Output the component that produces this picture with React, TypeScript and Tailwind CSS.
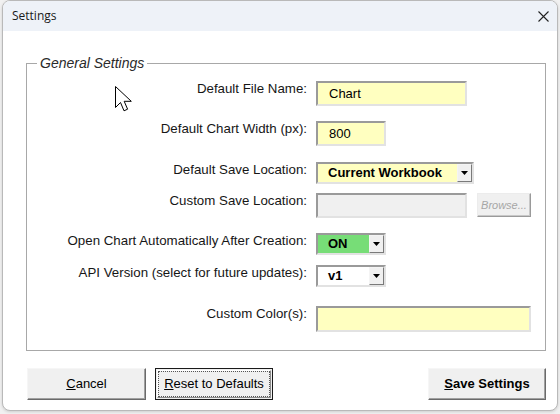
import React from "react";

const sunken =
  "border-2 border-t-[#9a9a9a] border-l-[#9a9a9a] border-b-[#e2e2e2] border-r-[#e2e2e2]";

function Arrow() {
  return (
    <svg width="7" height="4" viewBox="0 0 7 4">
      <path d="M0 0 H7 L3.5 4 Z" fill="#000" />
    </svg>
  );
}

function Combo({ cls, bg, text }: { cls: string; bg: string; text: string }) {
  return (
    <div className={`flex h-[22px] ${sunken} ${cls}`}>
      <div className={`flex flex-1 items-center pl-[10px] text-[13px] font-bold text-black ${bg}`}>
        {text}
      </div>
      <div className="flex w-[15px] items-center justify-center border border-t-[#f4f4f4] border-l-[#f4f4f4] border-b-[#7a7a7a] border-r-[#7a7a7a] bg-[#f0f0f0]">
        <Arrow />
      </div>
    </div>
  );
}

function Row({
  label,
  mt,
  children,
}: {
  label: string;
  mt: string;
  children: React.ReactNode;
}) {
  return (
    <div className={`flex items-start gap-[9px] ${mt}`}>
      <div className="w-[280px] text-right text-[13.3px] leading-[16px] text-[#161616]">{label}</div>
      {children}
    </div>
  );
}

function Cursor() {
  return (
    <svg
      className="absolute left-[114px] top-[85px]"
      width="20"
      height="28"
      viewBox="0 0 20 28"
    >
      <path
        d="M1.5 1.5 V22.5 L6.5 17.5 L10 25.8 L13.6 24.2 L10.2 16.3 H17.3 Z"
        fill="#fff"
        stroke="#000"
        strokeWidth="1"
        strokeLinejoin="miter"
      />
    </svg>
  );
}

export default function App() {
  return (
    <div
      className="relative h-[414px] w-[560px] bg-[#f1f1f1] pl-[2px]"
      style={{ fontFamily: '"Liberation Sans", Arial, sans-serif' }}
    >
      <div className="flex h-[411px] w-[556px] flex-col overflow-hidden rounded-[8px] border border-[#b9b9b9] bg-white shadow-[0_1px_3px_rgba(0,0,0,0.15)]">
        {/* Title bar */}
        <div className="flex h-[30px] shrink-0 items-center justify-between bg-[#eef2f8] pl-[9px] pr-[7px]">
          <span
            className="text-[12px] text-[#1a1a1a]"
            style={{ fontFamily: '"Open Sans", "Noto Sans", sans-serif' }}
          >
            Settings
          </span>
          <svg width="11" height="11" viewBox="0 0 11 11" className="mr-[1px]">
            <path d="M0.5 0.5 L10.5 10.5 M10.5 0.5 L0.5 10.5" stroke="#222" strokeWidth="1.1" />
          </svg>
        </div>

        {/* Body */}
        <div className="flex flex-1 flex-col pt-[24px]">
          <fieldset className="ml-[23px] h-[296px] w-[520px] border border-[#a8a8a8] px-0 pb-0 pt-[10px] shadow-[inset_1px_1px_0_#ffffff]">
            <legend className="ml-[10px] px-[3px] text-[14px] italic leading-[16px] text-[#2a2a2a]">
              General Settings
            </legend>

            <Row label="Default File Name:" mt="mt-0">
              <div className={`flex h-[25px] w-[151px] items-center bg-[#ffffc0] pl-[11px] text-[13px] text-black ${sunken}`}>
                Chart
              </div>
            </Row>

            <Row label="Default Chart Width (px):" mt="mt-[15px]">
              <div className={`flex h-[25px] w-[70px] items-center bg-[#ffffc0] pl-[11px] text-[13px] text-black ${sunken}`}>
                800
              </div>
            </Row>

            <Row label="Default Save Location:" mt="mt-[16px]">
              <Combo cls="w-[158px]" bg="bg-[#ffffc0]" text="Current Workbook" />
            </Row>

            <Row label="Custom Save Location:" mt="mt-[9px]">
              <div className="flex items-start gap-[10px]">
                <div className={`h-[25px] w-[151px] bg-[#f0f0f0] ${sunken}`} />
                <div className="flex h-[24px] w-[54px] items-center justify-center border border-t-[#ececec] border-l-[#ececec] border-b-[#9a9a9a] border-r-[#9a9a9a] bg-[#f0f0f0] text-[11px] italic text-[#a6a6a6] shadow-[inset_-1px_-1px_0_#c8c8c8]">
                  Browse...
                </div>
              </div>
            </Row>

            <Row label="Open Chart Automatically After Creation:" mt="mt-[15px]">
              <Combo cls="w-[70px]" bg="bg-[#77dd77]" text="ON" />
            </Row>

            <Row label="API Version (select for future updates):" mt="mt-[10px]">
              <Combo cls="w-[70px]" bg="bg-white" text="v1" />
            </Row>

            <Row label="Custom Color(s):" mt="mt-[19px]">
              <div className={`h-[26px] w-[215px] bg-[#ffffc0] ${sunken}`} />
            </Row>
          </fieldset>

          {/* Buttons */}
          <div className="mt-[17px] flex pl-[24px] pr-[11px]">
            <button className="flex h-[32px] w-[119px] items-center justify-center border border-t-[#f6f6f6] border-l-[#f6f6f6] border-b-[#6a6a6a] border-r-[#6a6a6a] bg-[#f0f0f0] text-[13px] text-black shadow-[inset_-1px_-1px_0_#a0a0a0]">
              <span>
                <span className="underline">C</span>ancel
              </span>
            </button>
            <button className="ml-[9px] flex h-[32px] w-[118px] items-center justify-center border border-[#1a1a1a] bg-[#f0f0f0] p-[1px] text-[13px] text-black">
              <span className="flex h-full w-full items-center justify-center border border-t-[#ffffff] border-l-[#ffffff] border-b-[#8a8a8a] border-r-[#8a8a8a]">
                <span className="flex h-full w-full items-center justify-center border border-dotted border-[#555]">
                  <span>
                    <span className="underline">R</span>eset to Defaults
                  </span>
                </span>
              </span>
            </button>
            <button className="ml-auto flex h-[32px] w-[118px] items-center justify-center border border-t-[#f6f6f6] border-l-[#f6f6f6] border-b-[#6a6a6a] border-r-[#6a6a6a] bg-[#f0f0f0] text-[13px] font-bold text-black shadow-[inset_-1px_-1px_0_#a0a0a0]">
              <span>
                <span className="underline">S</span>ave Settings
              </span>
            </button>
          </div>
        </div>
      </div>
      <Cursor />
    </div>
  );
}
